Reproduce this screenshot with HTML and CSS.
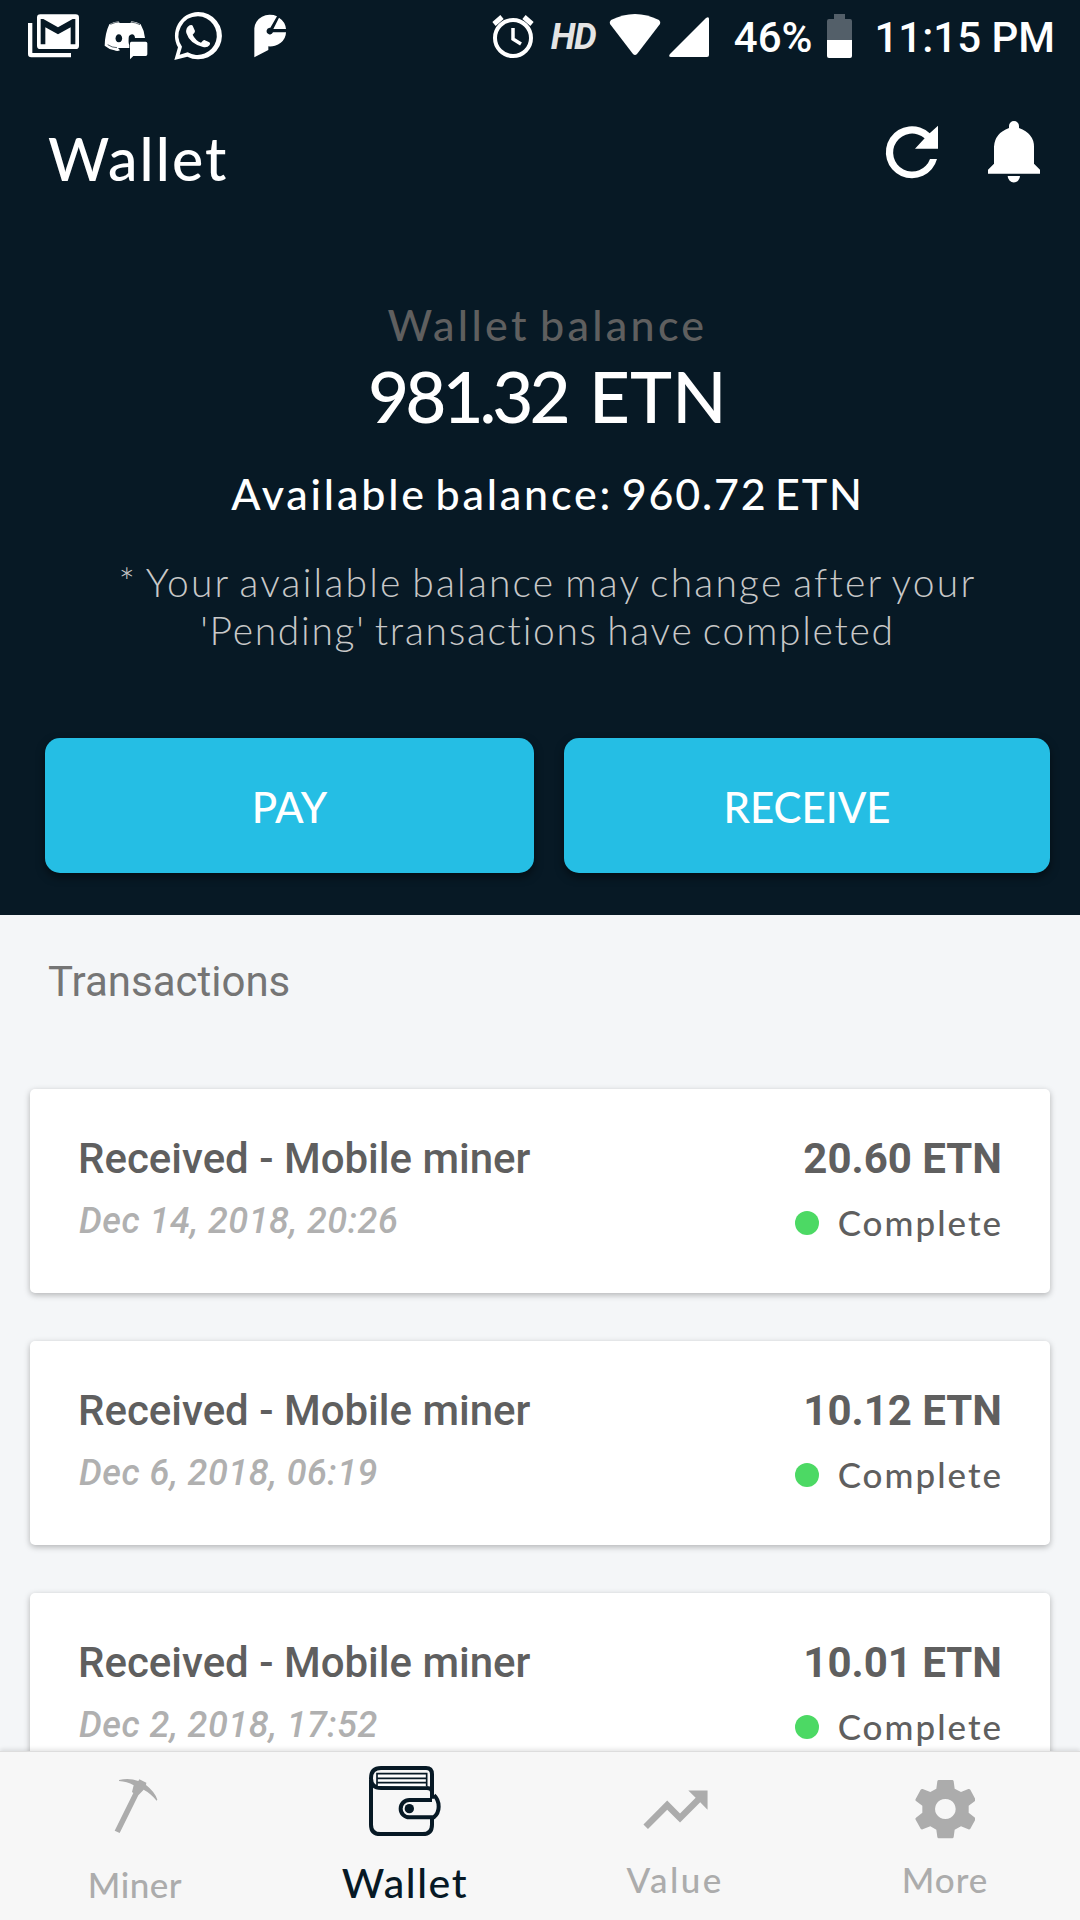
FILE: index.html
```html
<!DOCTYPE html>
<html lang="en">
	<head>
		<meta charset="utf-8">
		<title>Wallet</title>
		<link rel="stylesheet" href="styles.css">
	</head>
	<body>
		<div class="app">
			<div class="top">
				<div class="status">
					<svg class="s-left" width="320" height="76" viewBox="0 0 960 228" fill="#fff">
						<path d="M84 69h13v90h116v13H94q-10 0-10-10z"/>
						<path fill-rule="evenodd" d="M121 43h106q10 0 10 10v84q0 10-10 10H121q-10 0-10-10V53q0-10 10-10zM122 57v76h14V82l38 21 38-21v51h14V57h-8l-44 25-44-25z"/>
						<path fill-rule="evenodd" d="M328 73q12-8 28-9l3 5h32l3-5q17 1 28 9 10 17 13 41h-30q-1-11-9-11-10 2-10 11-1 17 2 21v9h-34l6 7q-8 4-17 0-16-3-29-14 1-37 14-64zM356 103a10 12 0 1 0 1 0z"/>
						<path d="M394 125h43q5 0 5 5v33q0 5-5 5h-37l-10 10v-48q0-5 4-5z"/>
						<path fill="none" stroke="#071925" stroke-width="2" d="M331 73q15-7 30-8M390 66q17 1 30 8M323 134q13 9 28 9"/>
						<path fill-rule="evenodd" d="M594 36a71 71 0 1 1-32 134l-39 10 11-38a71 71 0 0 1 60-106zM594 49a58 58 0 0 0-48 91l-7 24 24-7a58 58 0 1 0 31-108z"/>
						<path d="M569 76q7-3 9 1l7 16q1 4-7 11 8 17 25 24 7-9 10-8l15 7q4 2 1 8-7 9-20 6-40-10-50-42-3-15 10-23z"/>
						<path d="M763 172V85a47 42 0 0 1 68-36l-20 34a10 10 0 1 0 8 14h39a48 42 0 0 1-53 42v11zM837 53q19 12 21 34h-38z"/>
					</svg>
					<div class="s-right">
						<svg width="42" height="76" viewBox="0 0 42 76" fill="none" stroke="#fff">
							<ellipse cx="21" cy="38" rx="18" ry="18" stroke-width="4"/>
							<path d="M21 28v11l8 5" stroke-width="3.5"/>
							<path d="M2 24l8-7M40 24l-8-7" stroke-width="5"/>
						</svg>
						<span class="hd">HD</span>
						<svg width="52" height="76" viewBox="0 0 52 76" fill="#fff"><path d="M1 24q-1-2 1-4 24-12 48 0 2 2 1 4L28 54q-2 2-4 0z"/></svg>
						<svg class="signal" width="40" height="76" viewBox="0 0 40 76" fill="#fff"><path d="M37 18q3-2 3 1v36q0 2-2 2H2q-3 0-1-3z"/></svg>
						<span class="percent">46%</span>
						<svg class="battery" width="25" height="76" viewBox="0 0 25 76"><path fill="#535f69" d="M7 14h11v5h5q2 0 2 2v19H0V21q0-2 2-2h5z"/><path fill="#fff" d="M0 40h25v16q0 2-2 2H2q-2 0-2-2z"/></svg>
						<span class="time">11:15 PM</span>
					</div>
				</div>
				<div class="header">
					<h1>Wallet</h1>
					<svg width="220" height="100" viewBox="0 0 660 300" fill="#fff">
						<path d="M234 77v69h-69l29-31a57 57 0 1 0 16 62h21a78 78 0 1 1-22-77z"/>
						<path d="M447 84v-6a15 15 0 0 1 30 0v6q45 17 45 56v51l18 18v12H384v-12l18-18v-51q2-40 45-56zM443 228h37a18 19 0 0 1-37 0z"/>
					</svg>
				</div>
				<div class="balance">
					<div class="label">Wallet balance</div>
					<div class="amount"><span class="num">981.32</span> ETN</div>
					<div class="available">Available balance: <span class="num">960.72 ETN</span></div>
					<p class="note"><span class="n1">* Your available balance may change after your</span><br><span class="n2">'Pending' transactions have completed</span></p>
				</div>
				<div class="buttons">
					<button class="pay">PAY</button>
					<button class="receive">RECEIVE</button>
				</div>
			</div>
			<div class="list">
				<h2>Transactions</h2>
				<div class="card">
					<div class="left">
						<div class="name">Received - Mobile miner</div>
						<div class="date">Dec 14, 2018, 20:26</div>
					</div>
					<div class="right">
						<div class="sum">20.60 ETN</div>
						<div class="state"><i class="dot"></i><span>Complete</span></div>
					</div>
				</div>
				<div class="card">
					<div class="left">
						<div class="name">Received - Mobile miner</div>
						<div class="date">Dec 6, 2018, 06:19</div>
					</div>
					<div class="right">
						<div class="sum">10.12 ETN</div>
						<div class="state"><i class="dot"></i><span>Complete</span></div>
					</div>
				</div>
				<div class="card">
					<div class="left">
						<div class="name">Received - Mobile miner</div>
						<div class="date">Dec 2, 2018, 17:52</div>
					</div>
					<div class="right">
						<div class="sum">10.01 ETN</div>
						<div class="state"><i class="dot"></i><span>Complete</span></div>
					</div>
				</div>
			</div>
			<div class="nav">
				<div class="tab miner">
					<svg width="150" height="100" viewBox="0 -2 450 300" fill="#acacac">
						<path d="M177 82q31-7 58 3l3-5 21 10-1 7q26 20 34 44l-2 3q-18-22-39-33l-16 17-56 113-15-7 56-113-4-3 5-20q-20-12-44-13z"/>
					</svg>
					<span>Miner</span>
				</div>
				<div class="tab active">
					<svg width="90" height="100" viewBox="0 6 270 300" fill="none" stroke="#071925" stroke-width="12">
						<path d="M33 90v134q0 28 28 28h127q28 0 28-28v-20M216 146V73q0-19-18-19H63q-30 0-30 31 0 29 30 29h138q15 0 15 13"/>
						<path d="M216 150h-68a26 26 0 0 0 0 52h73q15-12 15-32 0-21-14-34"/>
						<path fill="#fff" stroke-width="5" d="M51 108V71h149v38M51 85h149M51 98h149"/>
						<circle cx="148" cy="176" r="14" fill="#071925" stroke="none"/>
					</svg>
					<span>Wallet</span>
				</div>
				<div class="tab value">
					<svg width="77" height="100" viewBox="0 0 24 31.2" fill="#acacac">
						<path d="M16 12l2.29 2.29-4.88 4.88-4-4L2 22.59 3.41 24l6-6 4 4 6.3-6.29L22 18v-6z"/>
					</svg>
					<span>Value</span>
				</div>
				<div class="tab more">
					<svg width="60" height="100" viewBox="0 0 180 300" fill="#acacac">
						<path fill-rule="evenodd" d="M71 84h41q3 0 4 4l3 22 19 10 22-9q4-1 6 2l15 28q2 4-1 6l-19 14v21l19 15q3 2 1 6l-15 27q-2 3-6 2l-22-9-19 10-3 22q-1 4-4 4H71q-3 0-4-4l-3-22-18-10-23 9q-4 1-6-2L2 203q-2-4 1-6l19-15v-21L3 147q-3-2-1-6l15-28q2-3 6-2l23 9 18-10 3-22q1-4 4-4zM91 141a31 30 0 1 0 .1 0z"/>
					</svg>
					<span>More</span>
				</div>
			</div>
		</div>
	</body>
</html>
```
FILE: styles.css
```css
body{margin: 0; background-color: #f4f6f8; font-family: Roboto, sans-serif;}
h1,h2,p{margin: 0; font-weight: 400;}
svg{display: block; flex: none;}
.app{width: 1080px; height: 1920px; display: flex; flex-direction: column; overflow: hidden;}
.top{height: 915px; flex: none; background-color: #071925; color: #fff; font-family: Lato, sans-serif;}

.status{display: flex; justify-content: space-between; height: 76px;}
.s-right{display: flex; align-items: center; padding-right: 25px; font: 500 42px/76px Roboto, sans-serif; white-space: nowrap;}
.hd{width: 43px; font-size: 36px; font-style: italic; font-weight: 700; letter-spacing: -1.5px; margin: -3px 15px 0 17px; color: #e4e4e4;}
.signal{margin-left: 8px;}
.percent{margin-left: 25px;}
.battery{margin: 0 22px 0 15px;}

.header{display: flex; justify-content: space-between; height: 223px; padding: 24px 0 0 48px; box-sizing: border-box;}
.header h1{font-size: 59px; line-height: 117px; letter-spacing: 2.1px; font-weight: 500;}

.balance{padding-left: 15px; text-align: center; height: 439px;}
.label{font-size: 43px; line-height: 52px; color: #5f5f5f; letter-spacing: 3.3px; word-spacing: -4px; font-weight: 500;}
.amount{font-size: 71px; line-height: 89px; font-weight: 500; letter-spacing: .2px; word-spacing: 4px;}
.amount .num{letter-spacing: -4px;}
.available{font-size: 43px; line-height: 62px; margin-top: 23px; font-weight: 500; letter-spacing: 2.8px; word-spacing: -5px;}
.available .num{letter-spacing: 1.8px;}
.note{font-size: 39px; line-height: 48px; margin-top: 33px; font-weight: 300; color: #c8c8c8; word-spacing: -3px;}
.n1{letter-spacing: 2.2px;}
.n2{letter-spacing: 1.7px;}

.buttons{display: grid; grid-template-columns: 489px 486px; gap: 30px; padding-left: 45px;}
.buttons button{height: 135px; padding: 2px 0 0; border: 0; border-radius: 15px; background-color: #25bee4; color: #fff; font: 500 42px Lato, sans-serif; box-shadow: 0 4px 8px rgba(0,0,0,.5);}

.list{flex: 1; min-height: 0; overflow: hidden; padding: 0 30px;}
.list h2{height: 174px; padding-left: 18px; font-size: 42px; line-height: 133px; color: #757575;}
.card{display: flex; justify-content: space-between; height: 204px; margin-bottom: 48px; padding: 44px 48px 0 48px; box-sizing: border-box; background-color: #fff; border-radius: 5px; box-shadow: 0 2px 6px rgba(0,0,0,.28); color: #5f5f5f;}
.name,.sum{font-size: 42px; line-height: 52px; font-weight: 500;}
.sum{font-weight: 700; text-align: right;}
.date{font-size: 36px; line-height: 50px; margin-top: 11px; padding-left: 1px; font-style: italic; font-weight: 500; letter-spacing: .5px; color: #b0b0b0;}
.state{display: flex; align-items: center; justify-content: flex-end; margin-top: 13px; font: 500 35px/48px Lato, sans-serif; letter-spacing: 2px;}
.state span{margin-right: -1px;}
.dot{width: 24px; height: 24px; margin: 2px 19px 0 0; border-radius: 50%; background-color: #4cd964;}

.nav{flex: none; position: relative; display: grid; grid-template-columns: repeat(4, 1fr); height: 169px; background-color: #f7f7f7; border-top: 1px solid #ddd; box-sizing: border-box; box-shadow: 0 -2px 4px rgba(0,0,0,.1);}
.tab{display: flex; flex-direction: column; align-items: center; color: #acacac; font: 500 35px/48px Lato, sans-serif;}
.miner span{margin-top: 8px; letter-spacing: .5px;}
.active{color: #071925; font-size: 41px;}
.active span{margin-top: 7px; letter-spacing: 1.6px;}
.value span,.more span{margin-top: 3px; letter-spacing: 1px;}
.value span{letter-spacing: 2.4px;}
```
